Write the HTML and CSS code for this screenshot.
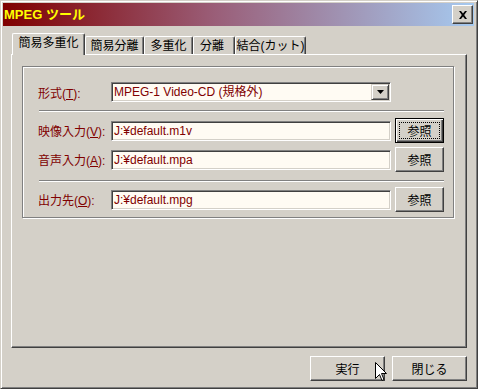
FILE: index.html
```html
<!DOCTYPE html>
<html lang="ja">
<head>
<meta charset="utf-8">
<title>MPEG ツール</title>
<link rel="stylesheet" href="styles.css">
</head>
<body>
<div class="window">
  <div class="titlebar">
    <span class="title">MPEG ツール</span>
    <button class="close" aria-label="閉じる">
      <svg width="10" height="8" viewBox="0 0 10 8"><path d="M1 0h2l2 2.6L7 0h2L6.2 4 9 8H7L5 5.4 3 8H1l2.8-4z" fill="#000"/></svg>
    </button>
  </div>
  <div class="client">
    <div class="tabs">
      <div class="tab active">簡易多重化</div>
      <div class="tab">簡易分離</div>
      <div class="tab">多重化</div>
      <div class="tab">分離</div>
      <div class="tab">結合(カット)</div>
    </div>
    <div class="panel">
      <div class="group">
        <div class="row row-combo">
          <label class="label">形式(<u>T</u>):</label>
          <div class="combo">
            <span class="value">MPEG-1 Video-CD (規格外)</span>
            <span class="drop"><svg width="7" height="4" viewBox="0 0 7 4"><path d="M0 0h7L3.5 4z" fill="#000"/></svg></span>
          </div>
        </div>
        <div class="sep"></div>
        <div class="row">
          <label class="label">映像入力(<u>V</u>):</label>
          <div class="field">J:¥default.m1v</div>
          <button class="btn btn-small btn-default">参照</button>
        </div>
        <div class="row row-gap">
          <label class="label">音声入力(<u>A</u>):</label>
          <div class="field">J:¥default.mpa</div>
          <button class="btn btn-small">参照</button>
        </div>
        <div class="sep sep-2"></div>
        <div class="row">
          <label class="label">出力先(<u>O</u>):</label>
          <div class="field">J:¥default.mpg</div>
          <button class="btn btn-small">参照</button>
        </div>
      </div>
    </div>
    <div class="actions">
      <button class="btn btn-wide">実行</button>
      <button class="btn btn-wide">閉じる</button>
    </div>
  </div>
  <svg class="cursor" width="13" height="21" viewBox="0 0 13 21"><path d="M0.5 0.5V16.5L4.5 12.5L7 18.5L9 17.5L6.5 11.5H11.5Z" fill="#fff" stroke="#000" stroke-width="1" stroke-linejoin="miter"/></svg>
</div>
</body>
</html>
```
FILE: styles.css
```css
* { box-sizing: border-box; }

html, body {
  margin: 0;
  padding: 0;
  background: #d4d0c8;
}

body {
  font: 12px "Liberation Sans", "Noto Sans CJK JP", sans-serif;
  color: #000;
}

.window {
  position: relative;
  width: 478px;
  height: 389px;
  background: #d4d0c8;
  border: 1px solid;
  border-color: #d4d0c8 #404040 #404040 #d4d0c8;
  box-shadow: inset 1px 1px 0 #fff, inset -1px -1px 0 #808080;
  padding: 2px 3px 2px 2px;
  display: flex;
  flex-direction: column;
}

.titlebar {
  height: 23px;
  background: linear-gradient(to right, #800000 0%, #9a5e78 45%, #a6caf0 100%);
  display: flex;
  align-items: center;
  justify-content: space-between;
  padding: 0 1px 0 1px;
}

.title {
  color: #ffff00;
  font: bold 13px "Liberation Sans", "Noto Sans CJK JP", sans-serif;
  line-height: 23px;
}

.close {
  width: 21px;
  height: 19px;
  padding: 0;
  margin: 0;
  background: #d4d0c8;
  border: 1px solid;
  border-color: #fff #404040 #404040 #fff;
  box-shadow: inset -1px -1px 0 #808080;
  display: flex;
  align-items: center;
  justify-content: center;
}

.close svg { display: block; margin-left: 1px; }

.client {
  flex: 1;
  display: flex;
  flex-direction: column;
  padding: 7px 7px 0 8px;
}

.tabs {
  display: flex;
  align-items: flex-end;
  height: 21px;
  padding-left: 1px;
}

.tab {
  height: 18px;
  display: flex;
  align-items: center;
  justify-content: center;
  background: #d4d0c8;
  border-top: 1px solid #fff;
  border-left: 1px solid #fff;
  border-right: 1px solid #404040;
  border-radius: 2px 2px 0 0;
  box-shadow: inset -1px 0 0 #808080;
  white-space: nowrap;
  line-height: 14px;
}

.tab:nth-child(1) { width: 73px; }
.tab:nth-child(2) { width: 59px; }
.tab:nth-child(3) { width: 49px; }
.tab:nth-child(4) { width: 42px; justify-content: flex-start; padding-left: 6px; }
.tab:nth-child(5) { width: 71px; }

.tab.active {
  position: relative;
  z-index: 1;
  height: 22px;
  margin-bottom: -1px;
  padding-bottom: 3px;
}

.panel {
  width: 456px;
  height: 294px;
  border: 1px solid;
  border-color: #fff #404040 #404040 #fff;
  box-shadow: inset -1px -1px 0 #808080;
  padding: 11px 0 0 10px;
}

.group {
  width: 432px;
  border: 1px solid #808080;
  box-shadow: 1px 1px 0 #fff, inset 1px 1px 0 #fff;
  padding: 15px 9px 5px 15px;
}

.row {
  display: flex;
  align-items: center;
  height: 25px;
}

.row-combo { height: 20px; }

.row-gap { margin-top: 4px; }

.label {
  width: 73px;
  color: #800000;
  white-space: nowrap;
}

.label u { text-decoration: underline; }

.combo,
.field {
  width: 280px;
  height: 20px;
  background: #fffbf3;
  border: 1px solid;
  border-color: #808080 #fff #fff #808080;
  box-shadow: inset 1px 1px 0 #404040, inset -1px -1px 0 #d4d0c8;
  color: #800000;
  white-space: nowrap;
}

.field {
  padding: 0 0 0 2px;
  line-height: 18px;
}

.combo {
  display: flex;
  align-items: stretch;
  padding: 1px;
}

.combo .value {
  flex: 1;
  padding-left: 1px;
  line-height: 16px;
}

.drop {
  width: 18px;
  background: #d4d0c8;
  border: 1px solid;
  border-color: #d4d0c8 #404040 #404040 #d4d0c8;
  box-shadow: inset 1px 1px 0 #fff, inset -1px -1px 0 #808080;
  display: flex;
  align-items: center;
  justify-content: center;
}

.drop svg { display: block; }

.sep {
  width: 405px;
  height: 2px;
  margin: 8px 0 6px 1px;
  border-top: 1px solid #808080;
  border-bottom: 1px solid #fff;
}

.sep-2 { margin-bottom: 5px; }

.btn {
  font: 12px "Liberation Sans", "Noto Sans CJK JP", sans-serif;
  color: #000;
  background: #d4d0c8;
  height: 25px;
  padding: 0;
  margin: 0;
  border: 1px solid;
  border-color: #fff #404040 #404040 #fff;
  box-shadow: inset -1px -1px 0 #808080;
  display: flex;
  align-items: center;
  justify-content: center;
}

.btn-small {
  width: 49px;
  margin-left: 4px;
}

.btn-default {
  border: 1px solid #000;
  box-shadow: inset 1px 1px 0 #fff, inset -1px -1px 0 #404040, inset -2px -2px 0 #808080;
  outline: 1px dotted #000;
  outline-offset: -5px;
}

.actions {
  display: flex;
  justify-content: flex-end;
  gap: 7px;
  margin-top: 8px;
}

.btn-wide { width: 75px; }

.cursor {
  position: absolute;
  left: 374px;
  top: 361px;
}
```
